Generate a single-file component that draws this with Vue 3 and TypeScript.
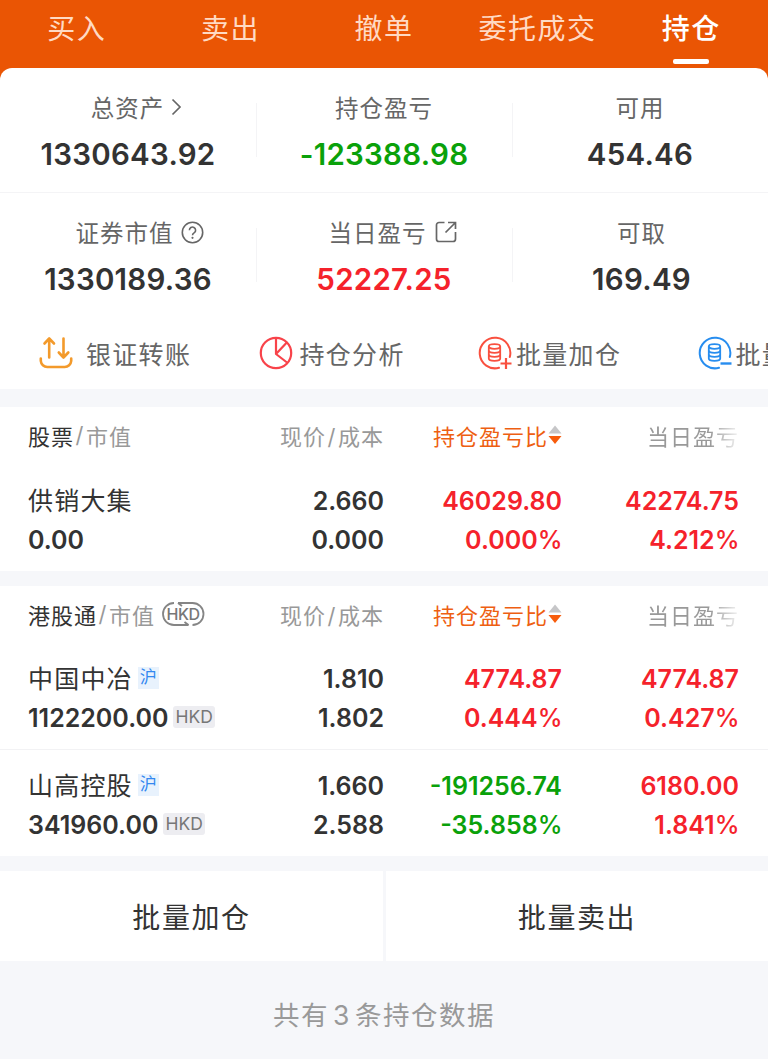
<script setup lang="ts">
type Tone = 'up' | 'down' | 'plain'

interface Stat {
  label: string
  value: string
  tone: Tone
  icon?: 'chevron' | 'help' | 'share'
}

interface Cell {
  text: string
  tone: Tone
  percent?: boolean
}

interface Holding {
  name: string
  market?: string
  amount: string
  currency?: string
  cells: [Cell, Cell][]
}

interface Group {
  title: string
  hkd: boolean
  rows: Holding[]
}

const tabs = ['买入', '卖出', '撤单', '委托成交', '持仓']
const activeTab = '持仓'

const stats: Stat[][] = [
  [
    { label: '总资产', value: '1330643.92', tone: 'plain', icon: 'chevron' },
    { label: '持仓盈亏', value: '-123388.98', tone: 'down' },
    { label: '可用', value: '454.46', tone: 'plain' },
  ],
  [
    { label: '证券市值', value: '1330189.36', tone: 'plain', icon: 'help' },
    { label: '当日盈亏', value: '52227.25', tone: 'up', icon: 'share' },
    { label: '可取', value: '169.49', tone: 'plain' },
  ],
]

const cell = (text: string, tone: Tone): Cell => ({ text, tone })
const rate = (text: string, tone: Tone): Cell => ({ text, tone, percent: true })

const groups: Group[] = [
  {
    title: '股票',
    hkd: false,
    rows: [
      {
        name: '供销大集',
        amount: '0.00',
        cells: [
          [cell('2.660', 'plain'), cell('0.000', 'plain')],
          [cell('46029.80', 'up'), rate('0.000', 'up')],
          [cell('42274.75', 'up'), rate('4.212', 'up')],
        ],
      },
    ],
  },
  {
    title: '港股通',
    hkd: true,
    rows: [
      {
        name: '中国中冶',
        market: '沪',
        amount: '1122200.00',
        currency: 'HKD',
        cells: [
          [cell('1.810', 'plain'), cell('1.802', 'plain')],
          [cell('4774.87', 'up'), rate('0.444', 'up')],
          [cell('4774.87', 'up'), rate('0.427', 'up')],
        ],
      },
      {
        name: '山高控股',
        market: '沪',
        amount: '341960.00',
        currency: 'HKD',
        cells: [
          [cell('1.660', 'plain'), cell('2.588', 'plain')],
          [cell('-191256.74', 'down'), rate('-35.858', 'down')],
          [cell('6180.00', 'up'), rate('1.841', 'up')],
        ],
      },
    ],
  },
]
</script>

<template>
  <div class="page">
    <nav class="tabs">
      <div v-for="t in tabs" :key="t" class="tab" :class="{ active: t === activeTab }">
        <span>{{ t }}</span>
      </div>
    </nav>

    <div class="sheet-wrap">
      <section class="sheet">
        <div v-for="(row, i) in stats" :key="i" class="stat-row">
          <div v-for="s in row" :key="s.label" class="stat">
            <div class="stat-label" :class="s.icon">
              <span>{{ s.label }}</span>
              <svg v-if="s.icon === 'chevron'" class="i-chevron" width="11" height="18" viewBox="0 0 11 18">
                <path d="M1.5 1.5 9 9 1.5 16.5" fill="none" stroke="#666" stroke-width="1.7" />
              </svg>
              <svg v-else-if="s.icon === 'help'" class="i-help" width="23" height="23" viewBox="0 0 23 23" fill="none" stroke="#666" stroke-width="1.6">
                <circle cx="11.5" cy="11.5" r="10.2" />
                <path d="M8.4 9.2a3.1 3.1 0 1 1 4.9 2.5c-1.2.8-1.8 1.3-1.8 2.5" />
                <circle cx="11.5" cy="16.8" r="1.1" fill="#666" stroke="none" />
              </svg>
              <svg v-else-if="s.icon === 'share'" class="i-share" width="22" height="22" viewBox="0 0 22 22" fill="none" stroke="#666" stroke-width="1.7">
                <path d="M9.5 1.5H4A2.5 2.5 0 0 0 1.5 4v14A2.5 2.5 0 0 0 4 20.5h14a2.5 2.5 0 0 0 2.500-2.500v-7" />
                <path d="M13 1.500h7.500V8M20 2l-9.500 9.500" />
              </svg>
            </div>
            <div class="stat-value" :class="s.tone">{{ s.value }}</div>
          </div>
        </div>

        <div class="actions">
          <div class="action transfer">
            <svg width="34" height="34" viewBox="0 0 34 34" fill="none" stroke="#f39a2b" stroke-width="2.6" stroke-linecap="round" stroke-linejoin="round">
              <path d="M10.2 21.5V3M5.5 7.500 10.200 2.500 15 7.500" />
              <path d="M24.500 2.500V21M19.800 16.500 24.500 21.500 29.300 16.500" />
              <path d="M1.800 22.500v2.500a6.500 6.500 0 0 0 6.500 6h17.400a6.500 6.500 0 0 0 6.500-6v-2.500" />
            </svg>
            <span>银证转账</span>
          </div>
          <div class="action">
            <svg width="34" height="34" viewBox="0 0 34 34" fill="none" stroke="#f8434a" stroke-width="2.2" stroke-linejoin="round">
              <circle cx="17" cy="17" r="15.200" />
              <path d="M17 1.800V18L28 26.500M17 18 27.800 6.500" />
            </svg>
            <span>持仓分析</span>
          </div>
          <div class="action">
            <svg width="34" height="34" viewBox="0 0 34 34" fill="none" stroke="#f9503f" stroke-width="2">
              <path d="M31.800 21A15.300 15.300 0 1 0 21 31.800" stroke-linecap="round" />
              <g stroke-width="1.8">
                <ellipse cx="16.500" cy="10.500" rx="5.700" ry="2.300" />
                <path d="M10.800 10.500v12c0 1.300 2.500 2.300 5.700 2.300s5.700-1 5.700-2.300v-12" />
                <path d="M10.800 14.500c0 1.300 2.500 2.300 5.700 2.300s5.700-1 5.700-2.300M10.800 18.500c0 1.300 2.500 2.300 5.700 2.300s5.700-1 5.700-2.300" />
              </g>
              <path d="M22.500 27.500H33.500M28 22v11" stroke-width="2.200" />
            </svg>
            <span>批量加仓</span>
          </div>
          <div class="action">
            <svg width="34" height="34" viewBox="0 0 34 34" fill="none" stroke="#278def" stroke-width="2">
              <path d="M31.800 21A15.300 15.300 0 1 0 21 31.800" stroke-linecap="round" />
              <g stroke-width="1.8">
                <ellipse cx="16.500" cy="10.500" rx="5.700" ry="2.300" />
                <path d="M10.800 10.500v12c0 1.300 2.500 2.300 5.700 2.300s5.700-1 5.700-2.300v-12" />
                <path d="M10.800 14.500c0 1.300 2.500 2.300 5.700 2.300s5.700-1 5.700-2.300M10.800 18.500c0 1.300 2.500 2.300 5.700 2.300s5.700-1 5.700-2.300" />
              </g>
              <path d="M22.500 27.500H33.500" stroke-width="2.400" />
            </svg>
            <span>批量</span>
          </div>
        </div>
      </section>
    </div>

    <section v-for="g in groups" :key="g.title" class="group">
      <div class="grid head">
        <div class="head-title">
          <b>{{ g.title }}</b><i>/</i><span>市值</span>
          <svg v-if="g.hkd" class="i-hkd" width="44" height="26" viewBox="0 0 44 26" fill="none" stroke="#858585" stroke-width="1.8">
            <path d="M13 2a11 11 0 0 0 0 22h14.500" />
            <path d="M17 2H31.500a11 11 0 0 1 0 22" />
            <path d="M17 2l4 3M27.500 24l-4-3" />
            <text x="22" y="18.800" text-anchor="middle" class="hkd-text">HKD</text>
          </svg>
        </div>
        <div class="head-price">现价<i>/</i>成本</div>
        <div class="head-sort">
          <span>持仓盈亏比</span>
          <svg width="14" height="20" viewBox="0 0 14 20">
            <path d="M7 .5 13.500 8.500H.5z" fill="#c6c6c8" />
            <path d="M.5 11h13L7 19z" fill="#f75c0c" />
          </svg>
        </div>
        <div class="head-day"><span>当日盈亏</span></div>
      </div>
      <div v-for="h in g.rows" :key="h.name" class="grid row">
        <div class="col first">
          <div class="line name">
            <span>{{ h.name }}</span><span v-if="h.market" class="market">{{ h.market }}</span>
          </div>
          <div class="line num">
            <span>{{ h.amount }}</span><span v-if="h.currency" class="currency">{{ h.currency }}</span>
          </div>
        </div>
        <div v-for="(pair, ci) in h.cells" :key="ci" class="col">
          <div v-for="(c, li) in pair" :key="li" class="line num" :class="c.tone">{{ c.text }}<span v-if="c.percent" class="percent">%</span></div>
        </div>
      </div>
    </section>

    <div class="buttons">
      <div class="button">批量加仓</div>
      <div class="button">批量卖出</div>
    </div>
    <footer class="foot">共有<span>3</span>条持仓数据</footer>
  </div>
</template>

<style>
body {
  margin: 0;
  background: #f6f7fa;
  overflow: hidden;
}
</style>

<style scoped>
.page {
  width: 768px;
  height: 1059px;
  overflow: hidden;
  background: #f6f7fa;
  color: #333;
  font-family: Inter, 'Noto Sans CJK SC', sans-serif;
}
.tabs {
  display: grid;
  grid-template-columns: repeat(5, 1fr);
  height: 68px;
  background: #ea5504;
}
.tab {
  display: flex;
  flex-direction: column;
  align-items: center;
  color: #ffdac4;
  font-size: 28px;
  letter-spacing: 1.5px;
  line-height: 40px;
  padding-top: 9px;
}
.tab.active {
  color: #fff;
  font-weight: 500;
}
.tab.active::after {
  content: '';
  width: 36px;
  height: 5px;
  margin-top: 10px;
  border-radius: 2px;
  background: #fff;
}
.sheet-wrap {
  background: linear-gradient(#ea5504 20px, #fff 20px);
}
.sheet {
  height: 321px;
  overflow: hidden;
  border-radius: 12px 12px 0 0;
  background: #fff;
}
.stat-row {
  display: grid;
  grid-template-columns: repeat(3, 1fr);
  height: 125px;
}
.stat-row:first-child {
  box-shadow: inset 0 -1px #f4f4f6;
}
.stat {
  position: relative;
  text-align: center;
  padding-top: 23px;
}
.stat + .stat::before {
  content: '';
  position: absolute;
  left: 0;
  top: 35px;
  width: 1px;
  height: 54px;
  background: #f4f4f6;
}
.stat-label {
  display: flex;
  justify-content: center;
  align-items: center;
  height: 32px;
  color: #666;
  font-size: 23.5px;
  letter-spacing: 1px;
}
.stat-label.chevron,
.stat-label.share { padding-left: 17px; }
.stat-label.help { padding-left: 23px; }
.stat-row:nth-child(2) .stat:last-child { padding-left: 3px; }
.i-chevron { margin-left: 7px; }
.i-help { margin-left: 7px; }
.i-share { margin-left: 8px; }
.stat-value {
  margin-top: 11px;
  line-height: 40px;
  font-size: 29.5px;
  font-weight: 600;
  letter-spacing: .25px;
}
.up { color: #f5222b; }
.down { color: #0aa10a; }
.actions {
  display: flex;
  width: 900px;
  height: 34px;
  padding: 18px 0 0 39px;
}
.action {
  flex: none;
  display: flex;
  align-items: center;
  gap: 7px;
  width: 219.5px;
  color: #666;
  font-size: 25px;
  letter-spacing: 1.3px;
  white-space: nowrap;
}
.action.transfer { gap: 13px; }
.action:nth-child(n + 3) { gap: 4px; }
.group {
  margin-top: 18px;
  background: #fff;
}
.group + .group { margin-top: 15px; }
.grid {
  display: grid;
  grid-template-columns: 206px 150px 178px 177px;
  padding-left: 28px;
}
.head {
  height: 55px;
  padding-bottom: 3px;
  align-items: center;
  justify-items: end;
  color: #999;
  font-size: 22px;
  letter-spacing: 1px;
}
.head i {
  font-style: normal;
  margin: 0 1.5px;
}
.head-title {
  justify-self: start;
  display: flex;
  align-items: center;
}
.head-title b {
  color: #333;
  font-weight: 400;
}
.i-hkd { margin-left: 6px; }
.hkd-text {
  font-family: Inter, sans-serif;
  font-size: 16px;
  font-weight: 500;
  letter-spacing: -.5px;
  fill: #777;
  stroke: none;
}
.head-sort {
  display: flex;
  align-items: center;
  color: #ee5f12;
}
.head-day span {
  mask-image: linear-gradient(90deg, #000 68%, transparent 104%);
}
.row { padding-top: 17px; padding-bottom: 11px; }
.group + .group .row { padding-top: 16px; }
.group + .group .row + .row {
  padding-top: 18px;
  box-shadow: inset 0 1px #f2f2f4;
}
.col { text-align: right; }
.first { text-align: left; }
.line {
  height: 39px;
  line-height: 39px;
  white-space: nowrap;
}
.first .line {
  display: flex;
  align-items: center;
}
.name {
  font-size: 25px;
  letter-spacing: 1.2px;
}
.num {
  font-size: 25px;
  font-weight: 600;
}
.percent {
  font-weight: 500;
  letter-spacing: -.5px;
}
.market {
  width: 21px;
  height: 22px;
  margin: 0 0 3px 5px;
  line-height: 21px;
  text-align: center;
  font-size: 17px;
  letter-spacing: 0;
  color: #3388f0;
  background: #e8f2fd;
}
.currency {
  height: 22px;
  margin: 0 0 4px 5px;
  padding: 0 2px;
  border-radius: 3px;
  line-height: 22px;
  font-size: 17.5px;
  font-weight: 400;
  color: #777;
  background: #ededf1;
}
.buttons {
  display: grid;
  grid-template-columns: 383px 382px;
  gap: 3px;
  margin-top: 15px;
}
.button {
  height: 90px;
  line-height: 95px;
  text-align: center;
  background: #fff;
  font-size: 28px;
  letter-spacing: 1.6px;
}
.foot {
  line-height: 40px;
  padding-top: 34px;
  text-align: center;
  color: #999;
  font-size: 26.5px;
  letter-spacing: 1.5px;
}
.foot span { margin: 0 4px; }
</style>
